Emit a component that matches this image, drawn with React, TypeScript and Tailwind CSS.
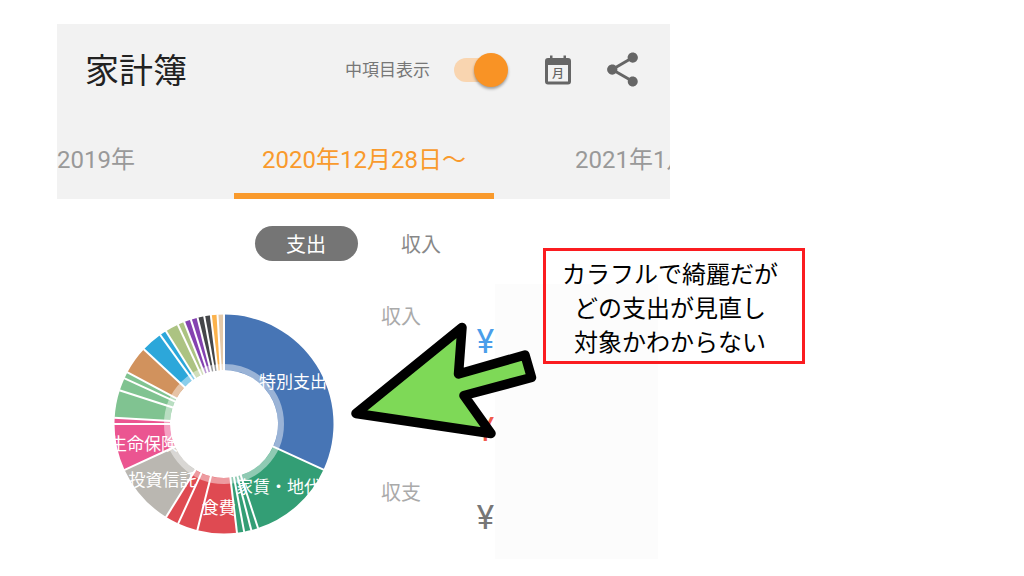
import { MdShare } from "react-icons/md";

type Slice = { end: number; color: string; label?: string };

const slices: Slice[] = [
  { end: 114.7, color: "#4775b5", label: "特別支出" },
  { end: 161.9, color: "#339e75", label: "家賃・地代" },
  { end: 165.6, color: "#339e75" },
  { end: 169.4, color: "#339e75" },
  { end: 173.2, color: "#339e75" },
  { end: 194.1, color: "#df4a52", label: "食費" },
  { end: 204.7, color: "#df4a52" },
  { end: 211.9, color: "#df4a52" },
  { end: 245.2, color: "#bab7b1", label: "投資信託" },
  { end: 270, color: "#eb5591", label: "生命保険" },
  { end: 273.3, color: "#eb5591" },
  { end: 287.9, color: "#80c391" },
  { end: 294.6, color: "#80c391" },
  { end: 298.2, color: "#80c391" },
  { end: 313, color: "#d1925d" },
  { end: 324.4, color: "#2ca7da" },
  { end: 328, color: "#2ca7da" },
  { end: 335.1, color: "#acc382" },
  { end: 338.7, color: "#acc382" },
  { end: 342.4, color: "#8442b0" },
  { end: 346, color: "#8442b0" },
  { end: 349.6, color: "#444649" },
  { end: 353.1, color: "#444649" },
  { end: 356.6, color: "#fbb24c" },
  { end: 360, color: "#e4c9a8" },
];

const point = (angle: number, radius: number) => {
  const rad = (angle * Math.PI) / 180;
  return [radius * Math.sin(rad), -radius * Math.cos(rad)];
};

const sector = (start: number, end: number, inner: number, outer: number) => {
  const [ax, ay] = point(start, outer);
  const [bx, by] = point(end, outer);
  const [cx, cy] = point(end, inner);
  const [dx, dy] = point(start, inner);
  return `M${ax} ${ay}A${outer} ${outer} 0 0 1 ${bx} ${by}L${cx} ${cy}A${inner} ${inner} 0 0 0 ${dx} ${dy}Z`;
};

function DonutChart() {
  const arcs = slices.map((s, i) => ({ ...s, start: i ? slices[i - 1].end : 0 }));
  return (
    <svg viewBox="-110 -110 220 220" className="mt-[9px] size-[220px] shrink-0 overflow-visible" role="img" aria-label="支出の内訳">
      {arcs.map((a) => (
        <path key={a.end} d={sector(a.start, a.end, 54, 109.5)} fill={a.color} />
      ))}
      <circle r="57" fill="none" stroke="#fff" strokeOpacity="0.45" strokeWidth="6" />
      {arcs.map((a) => {
        const [x1, y1] = point(a.end, 53);
        const [x2, y2] = point(a.end, 110);
        return <line key={a.end} x1={x1} y1={y1} x2={x2} y2={y2} stroke="#fff" strokeWidth="2" />;
      })}
      {arcs
        .filter((a) => a.label)
        .map((a) => {
          const [x, y] = point((a.start + a.end) / 2, 82);
          return (
            <text key={a.end} x={x} y={y + 8} textAnchor="middle" fill="#fff" fontSize="17">
              {a.label}
            </text>
          );
        })}
    </svg>
  );
}

function MonthIcon() {
  return (
    <svg viewBox="0 0 26 30" className="h-[30px] w-[26px]" aria-hidden="true">
      <path
        fill="#666"
        fillRule="evenodd"
        d="M5 0.5h2.5v2.5h11v-2.5h2.5v2.5h2a3 3 0 0 1 3 3v20.500a3 3 0 0 1-3 3H3a3 3 0 0 1-3-3v-20.500a3 3 0 0 1 3-3h2zM3 10v16.500h20v-16.500z"
      />
      <text x="13" y="23" textAnchor="middle" fontSize="12" fontWeight="500" fill="#666">
        月
      </text>
    </svg>
  );
}

const totals = [
  { label: "収入", color: "text-[#4a9eea]" },
  { label: "支出", color: "text-[#f15a4a]" },
  { label: "収支", color: "text-[#777]" },
];

export default function App() {
  return (
    <main className="relative min-h-screen overflow-hidden bg-white pt-6 pl-[57px] font-['Roboto','Noto_Sans_CJK_JP',sans-serif]">
      <div className="max-w-[613px]">
        <div className="overflow-hidden bg-[#f2f2f2]">
          <header className="flex h-[91px] items-center pr-[27px] pl-7">
            <h1 className="pt-0.5 text-[34px] leading-10 text-[#222]">家計簿</h1>
            <label className="ml-auto flex items-center gap-6 text-[17px] text-[#777]">
              <span className="pt-0.5">中項目表示</span>
              <input
                type="checkbox"
                role="switch"
                defaultChecked
                className="relative h-[34px] w-[54px] appearance-none before:absolute before:top-[5px] before:left-0 before:h-6 before:w-11 before:rounded-full before:bg-[#f9d5b0] after:absolute after:top-0 after:left-0 after:size-[34px] after:rounded-full after:bg-[#f99325] after:shadow-[0_2px_3px_rgba(0,0,0,0.35)] checked:after:left-5"
              />
            </label>
            <button type="button" aria-label="月表示" className="ml-[37px]">
              <MonthIcon />
            </button>
            <button type="button" aria-label="共有" className="ml-[31px] text-[#666]">
              <MdShare size={41} />
            </button>
          </header>
          <nav className="flex h-[84px] items-stretch text-2xl text-[#999]">
            <button type="button" className="w-[177px] shrink-0 border-b-6 border-transparent pt-3 text-left whitespace-nowrap">
              2019年
            </button>
            <button type="button" aria-current="true" className="w-[260px] shrink-0 border-b-6 border-[#f99a2c] pt-3 whitespace-nowrap text-[#f99a2c]">
              2020年12月28日〜
            </button>
            <button type="button" className="shrink-0 border-b-6 border-transparent pt-3 pl-[81px] whitespace-nowrap">
              2021年1月
            </button>
          </nav>
        </div>

        <div className="flex justify-center gap-3 pt-[27px] text-xl">
          <button type="button" className="h-[35px] w-[103px] rounded-full bg-[#757575] pt-0.5 text-white">
            支出
          </button>
          <button type="button" className="h-[35px] w-[103px] rounded-full pt-0.5 text-[#888]">
            収入
          </button>
        </div>

        <div className="flex items-start pt-11 pl-[57px]">
          <DonutChart />
          <dl className="ml-[47px] flex w-[113px] flex-col gap-[38px]">
            {totals.map((t) => (
              <div key={t.label}>
                <dt className="text-xl leading-6 text-[#aaa]">{t.label}</dt>
                <dd className={`text-right text-[33px] leading-[26px] ${t.color}`}>¥</dd>
              </div>
            ))}
          </dl>
        </div>
      </div>

      <div className="absolute top-[284px] left-[495px] h-[275px] w-[163px] bg-[#fcfcfc]" />
      <svg viewBox="0 0 190 124" className="absolute top-[318px] left-[350px] h-[124px] w-[190px]" aria-hidden="true">
        <path
          d="M6 95.5L112 9.5L108.5 56L175 37L181.5 59.5L114 77.5L141 115.5Z"
          fill="#7ed957"
          stroke="#000"
          strokeWidth="9.5"
          strokeLinejoin="round"
        />
      </svg>
      <p className="absolute top-[248px] left-[543px] border-3 border-[#fb1c20] pt-[5px] pr-6 pb-[3px] pl-4 text-center font-['Noto_Sans_CJK_JP',sans-serif] text-2xl leading-[34px] whitespace-nowrap text-black">
        カラフルで綺麗だが
        <br />
        どの支出が見直し
        <br />
        対象かわからない
      </p>
    </main>
  );
}
